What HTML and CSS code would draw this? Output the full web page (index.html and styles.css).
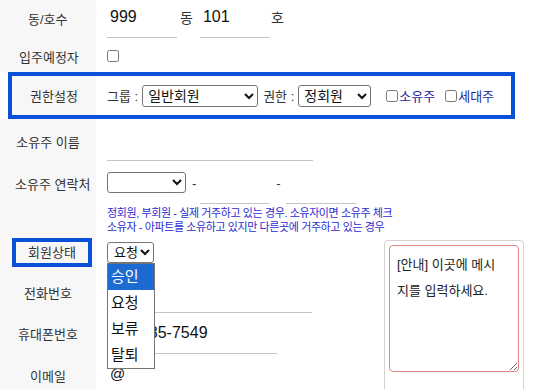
FILE: index.html
```html
<!DOCTYPE html>
<html lang="ko">
<head>
    <meta charset="UTF-8">
    <meta name="viewport" content="width=device-width, initial-scale=1.0">
    <title>회원정보 수정</title>
    <link rel="stylesheet" href="styles.css">
</head>
<body>
    <div class="form">
        <div class="row row-dong">
            <div class="label"><span>동/호수</span></div>
            <div class="value top">
                <input type="text" class="line dong" value="999">
                <span class="unit">동</span>
                <input type="text" class="line ho" value="101">
                <span class="unit unit-ho">호</span>
            </div>
        </div>

        <div class="row row-move">
            <div class="label"><span>입주예정자</span></div>
            <div class="value">
                <input type="checkbox" class="check">
            </div>
        </div>

        <div class="row row-auth">
            <div class="label"><span>권한설정</span></div>
            <div class="value">
                <span>그룹 :</span>
                <select class="sel sel-group">
                    <option>일반회원</option>
                    <option>관리자</option>
                </select>
                <span class="auth-text">권한 :</span>
                <select class="sel sel-level">
                    <option>정회원</option>
                    <option>부회원</option>
                </select>
                <label class="flag flag-owner"><input type="checkbox" class="check">소유주</label>
                <label class="flag"><input type="checkbox" class="check">세대주</label>
            </div>
        </div>

        <div class="row row-owner">
            <div class="label"><span>소유주 이름</span></div>
            <div class="value top">
                <input type="text" class="line owner-name">
            </div>
        </div>

        <div class="row row-contact">
            <div class="label label-top"><span>소유주 연락처</span></div>
            <div class="value column">
                <div class="phone">
                    <select class="sel sel-phone">
                        <option></option>
                        <option>010</option>
                        <option>011</option>
                    </select>
                    <span class="dash">-</span>
                    <input type="text" class="line part">
                    <span class="dash dash-2">-</span>
                    <input type="text" class="line part">
                </div>
                <p class="help">
                    정회원, 부회원 - 실제 거주하고 있는 경우. 소유자이면 소유주 체크<br>
                    소유자 - 아파트를 소유하고 있지만 다른곳에 거주하고 있는 경우
                </p>
            </div>
        </div>

        <div class="lower">
            <div class="lower-rows">
                <div class="row row-status">
                    <div class="label label-box-cell"><span class="label-box">회원상태</span></div>
                    <div class="value top status">
                        <select class="sel sel-status">
                            <option>요청</option>
                        </select>
                        <!-- opened dropdown list -->
                        <ul class="dropdown">
                            <li class="active">승인</li>
                            <li>요청</li>
                            <li>보류</li>
                            <li>탈퇴</li>
                        </ul>
                    </div>
                </div>

                <div class="row row-tel">
                    <div class="label"><span>전화번호</span></div>
                    <div class="value top">
                        <input type="text" class="line tel">
                    </div>
                </div>

                <div class="row row-mobile">
                    <div class="label"><span>휴대폰번호</span></div>
                    <div class="value top">
                        <input type="text" class="line mobile" value="010-1285-7549">
                    </div>
                </div>

                <div class="row row-mail">
                    <div class="label"><span>이메일</span></div>
                    <div class="value">
                        <span class="at">@</span>
                    </div>
                </div>
            </div>

            <div class="memo">
                <textarea class="memo-text">[안내] 이곳에 메시지를 입력하세요.</textarea>
            </div>
        </div>
    </div>
</body>
</html>
```

FILE: styles.css
```css
* {
    box-sizing: border-box;
}

body {
    margin: 0;
    font-family: "Liberation Sans", "Noto Sans CJK KR", sans-serif;
    font-size: 13px;
    color: #333;
    background: #fff;
}

.form {
    width: 544px;
}

.row {
    display: grid;
    grid-template-columns: 96px 1fr;
}

.label {
    display: flex;
    align-items: center;
    justify-content: center;
    padding: 0 15px;
    background: #f7f7f7;
    white-space: nowrap;
    color: #333;
}

.label span {
    flex: none;
}

.value {
    display: flex;
    align-items: center;
    padding-left: 11px;
    white-space: nowrap;
}

.value.top {
    align-items: flex-start;
}

.value.column {
    flex-direction: column;
    align-items: flex-start;
}

/* underline inputs */
.line {
    border: 0;
    border-bottom: 1px solid #c4c4c4;
    padding: 8px 3px 11px;
    font-family: "Liberation Sans", "Noto Sans CJK KR", sans-serif;
    font-size: 16px;
    line-height: 18px;
    color: #111;
    background: transparent;
    outline: none;
}

.sel {
    height: 22px;
    padding: 0 1px;
    border: 1px solid #767676;
    border-radius: 3px;
    background: #fff;
    font-family: "Liberation Sans", "Noto Sans CJK KR", sans-serif;
    font-size: 14px;
    color: #111;
}

.check {
    width: 12px;
    height: 12px;
    margin: 0;
}

/* row 1 */
.row-dong {
    height: 40px;
}

.row-dong .label {
    justify-content: flex-start;
    padding: 0 0 4px 28px;
}

.dong, .ho {
    width: 70px;
}

.unit {
    padding-top: 7px;
    margin-left: 3px;
    font-size: 14px;
}

.ho {
    margin-left: 7px;
}

.unit-ho {
    margin-left: 1px;
}

/* row 2 */
.row-move {
    height: 32px;
}

.row-move .label {
    justify-content: flex-start;
    padding-left: 19px;
}

/* row 3 */
.row-auth {
    height: 47px;
    margin: 0 29px 0 8px;
    border: 4px solid #0a50d8;
    grid-template-columns: 84px 1fr;
}

.sel-group {
    width: 116px;
    margin-left: 4px;
}

.auth-text {
    margin-left: 5px;
}

.sel-level {
    width: 73px;
    margin-left: 4px;
}

.flag {
    display: flex;
    align-items: center;
    gap: 1px;
    margin-left: 10px;
    color: #1f1f9f;
}

.flag-owner {
    margin-left: 15px;
}

/* row 4 */
.row-owner {
    height: 44px;
}

.row-owner .value {
    padding-top: 4px;
}

.owner-name {
    width: 206px;
}

/* row 5 */
.row-contact {
    height: 72px;
}

.label-top {
    align-items: flex-start;
    justify-content: flex-start;
    padding-top: 11px;
}

.row-contact .value {
    padding-top: 9px;
}

.phone {
    display: flex;
    align-items: flex-start;
}

.sel-phone {
    width: 79px;
    height: 21px;
}

.dash {
    margin: 4px 4px 0 6px;
}

.dash-2 {
    margin: 4px 5px 0 6px;
}

.part {
    width: 70px;
    padding: 4px 3px 9px;
}

.help {
    margin: 2px 0 0;
    font-size: 11px;
    line-height: 14px;
    letter-spacing: -0.4px;
    color: #2b2bd0;
}

/* lower part with memo box */
.lower {
    display: flex;
    align-items: flex-start;
}

.lower-rows {
    width: 384px;
}

.row-status {
    height: 37px;
}

.label-box-cell {
    align-items: flex-start;
    justify-content: flex-start;
    padding: 3px 0 0 12px;
}

.label-box {
    display: block;
    width: 80px;
    height: 29px;
    border: 4px solid #0a50d8;
    line-height: 21px;
    text-align: center;
}

.status {
    position: relative;
    padding-top: 7px;
}

.sel-status {
    width: 47px;
    height: 21px;
    padding: 0 0 0 2px;
    font-size: 13px;
}

.dropdown {
    position: absolute;
    top: 28px;
    left: 11px;
    z-index: 2;
    width: 48px;
    margin: 0;
    padding: 0;
    list-style: none;
    background: #fff;
    border: 1px solid #767676;
    font-size: 15px;
    color: #111;
}

.dropdown li {
    height: 26px;
    line-height: 26px;
    padding-left: 3px;
}

.dropdown li.active {
    background: #1d6bd2;
    color: #fff;
}

.row-tel, .row-mobile {
    height: 41px;
}

.row-tel .value, .row-mobile .value {
    padding-top: 3px;
}

.tel {
    width: 205px;
}

.mobile {
    width: 170px;
    padding-left: 0;
    text-indent: -8px;
}

.row-mail {
    height: 42px;
}

.at {
    padding-left: 3px;
    padding-bottom: 4px;
    font-size: 15px;
    color: #111;
}

.memo {
    width: 140px;
    height: 160px;
    margin-top: 5px;
    padding: 4px;
    border: 1px solid #d2d2d2;
    border-radius: 4px;
}

.memo-text {
    display: block;
    width: 100%;
    height: 127px;
    padding: 6px 14px 6px 7px;
    border: 1px solid #e08a82;
    border-radius: 4px;
    font-family: "Liberation Sans", "Noto Sans CJK KR", sans-serif;
    font-size: 13px;
    line-height: 26px;
    color: #222;
    outline: none;
}
```
